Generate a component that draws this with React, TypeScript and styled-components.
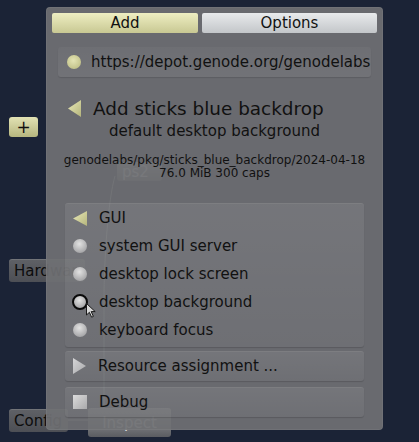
import React from 'react';
import styled, { createGlobalStyle } from 'styled-components';

const Global = createGlobalStyle`
  html, body { margin: 0; padding: 0; background: #1b2336; }
  body { font-family: "DejaVu Sans", Verdana, sans-serif; color: #111; }
`;

const Canvas = styled.div`
  position: relative;
  width: 419px;
  height: 442px;
  overflow: hidden;
  background: #1b2336;
`;

const GraphNode = styled.div<{ $x: number; $y: number; $w: number; $h: number; $light?: boolean; $center?: boolean }>`
  position: absolute;
  left: ${p => p.$x}px;
  top: ${p => p.$y}px;
  width: ${p => p.$w}px;
  height: ${p => p.$h}px;
  box-sizing: border-box;
  display: flex;
  align-items: center;
  justify-content: ${p => (p.$center ? 'center' : 'flex-start')};
  padding-left: ${p => (p.$center ? 0 : 5)}px;
  border-radius: 3px;
  background: ${p => (p.$light ? 'linear-gradient(#a2a3a6, #5a5c61)' : 'linear-gradient(#5f6166, #4d4f55)')};
  box-shadow: inset 0 1px 0 rgba(255, 255, 255, 0.12);
  font-size: 15px;
  color: ${p => (p.$light ? '#e0e0e0' : '#0c0c0c')};
`;

const PlusButton = styled.div`
  position: absolute;
  left: 9px;
  top: 117px;
  width: 29px;
  height: 20px;
  border-radius: 3px;
  background: linear-gradient(#e2e2b4, #b6b67f);
  display: flex;
  align-items: center;
  justify-content: center;
  font-size: 17px;
  color: #111;
`;

const Wires = styled.svg`
  position: absolute;
  left: 0;
  top: 0;
`;

const Panel = styled.div`
  position: absolute;
  left: 46px;
  top: 7px;
  width: 337px;
  height: 423px;
  box-sizing: border-box;
  border-radius: 4px;
  background: rgba(111, 112, 115, 0.93);
  box-shadow: inset 0 0 0 1px rgba(255, 255, 255, 0.05);
  padding: 6px 6px 0;
  display: flex;
  flex-direction: column;
`;

const Tabs = styled.div`
  display: flex;
  gap: 4px;
  height: 20px;
`;

const Tab = styled.div<{ $active?: boolean; $w: number }>`
  flex: 0 0 ${p => p.$w}px;
  border-radius: 2px;
  display: flex;
  align-items: center;
  justify-content: center;
  font-size: 15px;
  color: #111;
  background: ${p => (p.$active ? 'linear-gradient(#eeeec2, #c8c893)' : 'linear-gradient(#e8eaec, #c3c6c9)')};
`;

const UrlRow = styled.div`
  margin: 14px 6px 0;
  height: 30px;
  border-radius: 3px;
  display: flex;
  align-items: center;
  gap: 10px;
  padding-left: 9px;
  background: linear-gradient(rgba(255, 255, 255, 0.03), rgba(255, 255, 255, 0.06));
  box-shadow: 0 1px 1px rgba(0, 0, 0, 0.12);
  font-size: 15px;
`;

const Dot = styled.span<{ $tone: 'yellow' | 'grey'; $selected?: boolean }>`
  flex: 0 0 auto;
  box-sizing: border-box;
  width: ${p => (p.$selected ? 16 : 14)}px;
  height: ${p => (p.$selected ? 16 : 14)}px;
  margin-left: ${p => (p.$selected ? -1 : 0)}px;
  margin-right: ${p => (p.$selected ? -1 : 0)}px;
  border-radius: 50%;
  border: ${p => (p.$selected ? '2px solid #0a0a0a' : 'none')};
  background: ${p =>
    p.$tone === 'yellow'
      ? 'radial-gradient(circle at 45% 40%, #e4e4b4, #c2c28a 75%)'
      : 'radial-gradient(circle at 45% 35%, #e2e2e2, #a6a6a8 75%)'};
`;

const Header = styled.div`
  margin-top: 20px;
  display: flex;
  flex-direction: column;
  align-items: center;
`;

const TitleRow = styled.div`
  align-self: stretch;
  display: flex;
  align-items: center;
  gap: 12px;
  padding-left: 16px;
  height: 22px;
  font-size: 18.4px;
`;

const Subtitle = styled.div`
  margin-top: 3px;
  font-size: 15px;
  line-height: 18px;
`;

const Meta = styled.div<{ $first?: boolean }>`
  margin-top: ${p => (p.$first ? 14 : 0)}px;
  font-size: 12px;
  line-height: 13px;
`;

const Group = styled.div<{ $top: number; $h?: number }>`
  margin: ${p => p.$top}px 13px 0;
  ${p => (p.$h ? `height: ${p.$h}px;` : '')}
  border-radius: 3px;
  box-sizing: border-box;
  padding: ${p => (p.$h ? '0' : '1px 0 3px')};
  display: flex;
  flex-direction: column;
  justify-content: center;
  background: linear-gradient(rgba(255, 255, 255, 0.08), rgba(255, 255, 255, 0.035));
  box-shadow: inset 0 1px 0 rgba(255, 255, 255, 0.06), 0 1px 1px rgba(0, 0, 0, 0.15);
`;

const Item = styled.div`
  position: relative;
  height: 28px;
  display: flex;
  align-items: center;
  gap: 12px;
  padding-left: 8px;
  font-size: 15px;
`;

const Check = styled.span`
  flex: 0 0 auto;
  width: 14px;
  height: 14px;
  background: linear-gradient(135deg, #dcdcdc, #a9a9ab);
`;

const Pointer = styled.svg`
  position: absolute;
  left: 21px;
  top: 15px;
`;

const Triangle = ({ dir, tone, w, h }: { dir: 'left' | 'right'; tone: 'yellow' | 'grey'; w: number; h: number }) => {
  const id = `tri-${dir}-${tone}`;
  const pts = dir === 'left' ? `0,${h / 2} ${w},0 ${w},${h}` : `0,0 ${w},${h / 2} 0,${h}`;
  const c1 = tone === 'yellow' ? '#eaeab8' : '#d6d6d8';
  const c2 = tone === 'yellow' ? '#b4b47c' : '#a8a8aa';
  return (
    <svg width={w} height={h} style={{ flex: '0 0 auto' }}>
      <defs>
        <linearGradient id={id} x1="0" y1="0" x2="1" y2="1">
          <stop offset="0" stopColor={c1} />
          <stop offset="1" stopColor={c2} />
        </linearGradient>
      </defs>
      <polygon points={pts} fill={`url(#${id})`} />
    </svg>
  );
};

export default function App() {
  return (
    <>
      <Global />
      <Canvas>
        <Wires width={419} height={442}>
          <path d="M115 176 C 108 200, 104 260, 104 300 S 104 380, 104 410" stroke="#9a9ca2" strokeWidth="1" fill="none" />
          <line x1="68" y1="420" x2="88" y2="420" stroke="#a4a6aa" strokeWidth="1" />
        </Wires>
        <PlusButton>+</PlusButton>
        <GraphNode $x={117} $y={162} $w={45} $h={19} $light>ps2</GraphNode>
        <GraphNode $x={9} $y={259} $w={76} $h={23}>Hardware</GraphNode>
        <GraphNode $x={9} $y={409} $w={59} $h={23}>Config</GraphNode>
        <GraphNode $x={88} $y={408} $w={83} $h={29} $light $center>Inspect</GraphNode>

        <Panel>
          <Tabs>
            <Tab $active $w={146}>Add</Tab>
            <Tab $w={175}>Options</Tab>
          </Tabs>
          <UrlRow>
            <Dot $tone="yellow" />
            https://depot.genode.org/genodelabs
          </UrlRow>
          <Header>
            <TitleRow>
              <Triangle dir="left" tone="yellow" w={13} h={17} />
              Add sticks blue backdrop
            </TitleRow>
            <Subtitle>default desktop background</Subtitle>
            <Meta $first>genodelabs/pkg/sticks_blue_backdrop/2024-04-18</Meta>
            <Meta>76.0 MiB 300 caps</Meta>
          </Header>
          <Group $top={23}>
            <Item>
              <Triangle dir="left" tone="yellow" w={14} h={15} />
              GUI
            </Item>
            <Item>
              <Dot $tone="grey" />
              system GUI server
            </Item>
            <Item>
              <Dot $tone="grey" />
              desktop lock screen
            </Item>
            <Item>
              <Dot $tone="grey" $selected />
              desktop background
              <Pointer width={12} height={16} viewBox="0 0 12 16">
                <path d="M0.5 0.5 L0.5 12 L3.4 9.3 L5.6 14.2 L7.4 13.4 L5.2 8.6 L9.2 8.6 Z" fill="#d8d8d8" stroke="#1a1a1a" strokeWidth="1" />
              </Pointer>
            </Item>
            <Item>
              <Dot $tone="grey" />
              keyboard focus
            </Item>
          </Group>
          <Group $top={4} $h={30}>
            <Item>
              <Triangle dir="right" tone="grey" w={13} h={16} />
              Resource assignment ...
            </Item>
          </Group>
          <Group $top={6} $h={30}>
            <Item>
              <Check />
              Debug
            </Item>
          </Group>
        </Panel>
      </Canvas>
    </>
  );
}
